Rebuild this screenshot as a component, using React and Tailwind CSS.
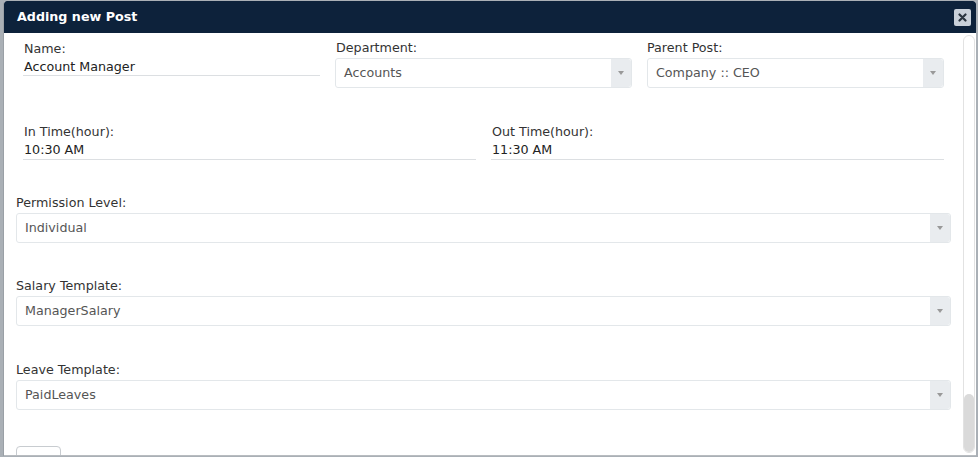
import React from "react";

function Select({ value, className = "" }) {
  return (
    <div className={`flex h-[30px] items-stretch rounded-[3px] border border-[#e3e7ea] bg-white ${className}`}>
      <div className="flex flex-1 items-center pl-[8px] text-[12.7px] text-[#555]">{value}</div>
      <div className="flex w-[20px] items-center justify-center rounded-r-[3px] bg-[#e9ecef]">
        <div className="h-0 w-0 border-x-[3.5px] border-t-[4px] border-x-transparent border-t-[#999]" />
      </div>
    </div>
  );
}

function TextField({ label, value, className = "", valueH = "h-[20px]" }) {
  return (
    <div className={className}>
      <div className="h-[15px] pl-[1px] text-[12.7px] leading-[15px] text-[#333]">{label}</div>
      <div className={`${valueH} border-b border-[#dcdfe2] pl-[1px] pt-[3px] text-[12.7px] leading-[15px] text-[#222]`}>{value}</div>
    </div>
  );
}

export default function App() {
  return (
    <div className="h-[457px] w-[978px] overflow-hidden bg-[#aab0b6]" style={{ fontFamily: '"DejaVu Sans", sans-serif' }}>
      <div className="ml-[3px] mt-[1px] flex h-[455px] w-[973px] flex-col overflow-hidden rounded-t-[3px] border-l border-[#9aa0a6] bg-white">
        <div className="flex h-[32px] shrink-0 items-center justify-between rounded-t-[3px] bg-[#0d223b] pl-[13px] pr-[5px]">
          <div className="text-[12.7px] font-bold text-white">Adding new Post</div>
          <div className="flex h-[17px] w-[17px] items-center justify-center rounded-[2px] bg-[#c9d1da]">
            <svg width="9" height="9" viewBox="0 0 9 9">
              <path d="M1.5 1.5 L7.5 7.5 M7.5 1.5 L1.5 7.5" stroke="#2a3540" strokeWidth="2.2" strokeLinecap="round" />
            </svg>
          </div>
        </div>
        <div className="relative flex min-h-0 flex-1 overflow-hidden">
          <div className="flex-1 pl-[12px] pr-[12px]">
            <div className="flex gap-[15px] pl-[7px] pr-[4px] pt-[7px]">
              <TextField label="Name:" value="Account Manager" className="w-[297px] pt-[1px]" />
              <div className="w-[297px]">
                <div className="h-[18px] pl-[1px] text-[12.7px] leading-[16px] text-[#333]">Department:</div>
                <Select value="Accounts" />
              </div>
              <div className="w-[297px]">
                <div className="h-[18px] text-[12.7px] leading-[16px] text-[#333]">Parent Post:</div>
                <Select value="Company :: CEO" />
              </div>
            </div>
            <div className="mt-[36px] flex gap-[15px] pl-[7px] pr-[4px]">
              <TextField label="In Time(hour):" value="10:30 AM" className="w-[453px]" valueH="h-[21px]" />
              <TextField label="Out Time(hour):" value="11:30 AM" className="w-[453px]" valueH="h-[21px]" />
            </div>
            <div className="mt-[35px]">
              <div className="h-[18px] text-[12.7px] leading-[16px] text-[#333]">Permission Level:</div>
              <Select value="Individual" />
            </div>
            <div className="mt-[35px]">
              <div className="h-[18px] text-[12.7px] leading-[16px] text-[#333]">Salary Template:</div>
              <Select value="ManagerSalary" />
            </div>
            <div className="mt-[36px]">
              <div className="h-[18px] text-[12.7px] leading-[16px] text-[#333]">Leave Template:</div>
              <Select value="PaidLeaves" />
            </div>
            <div className="mt-[36px] h-[20px] w-[45px] rounded-t-[4px] border border-[#c8ccd0]" />
          </div>
          <div className="mr-[1px] mt-[2px] mb-[2px] flex w-[12px] flex-col justify-end rounded-full border border-[#e2e2e2] bg-white">
            <div className="h-[58px] rounded-full bg-[#dadada]" />
          </div>
        </div>
        <div className="h-[1px] shrink-0 bg-[#b8bcc0]" />
      </div>
    </div>
  );
}
